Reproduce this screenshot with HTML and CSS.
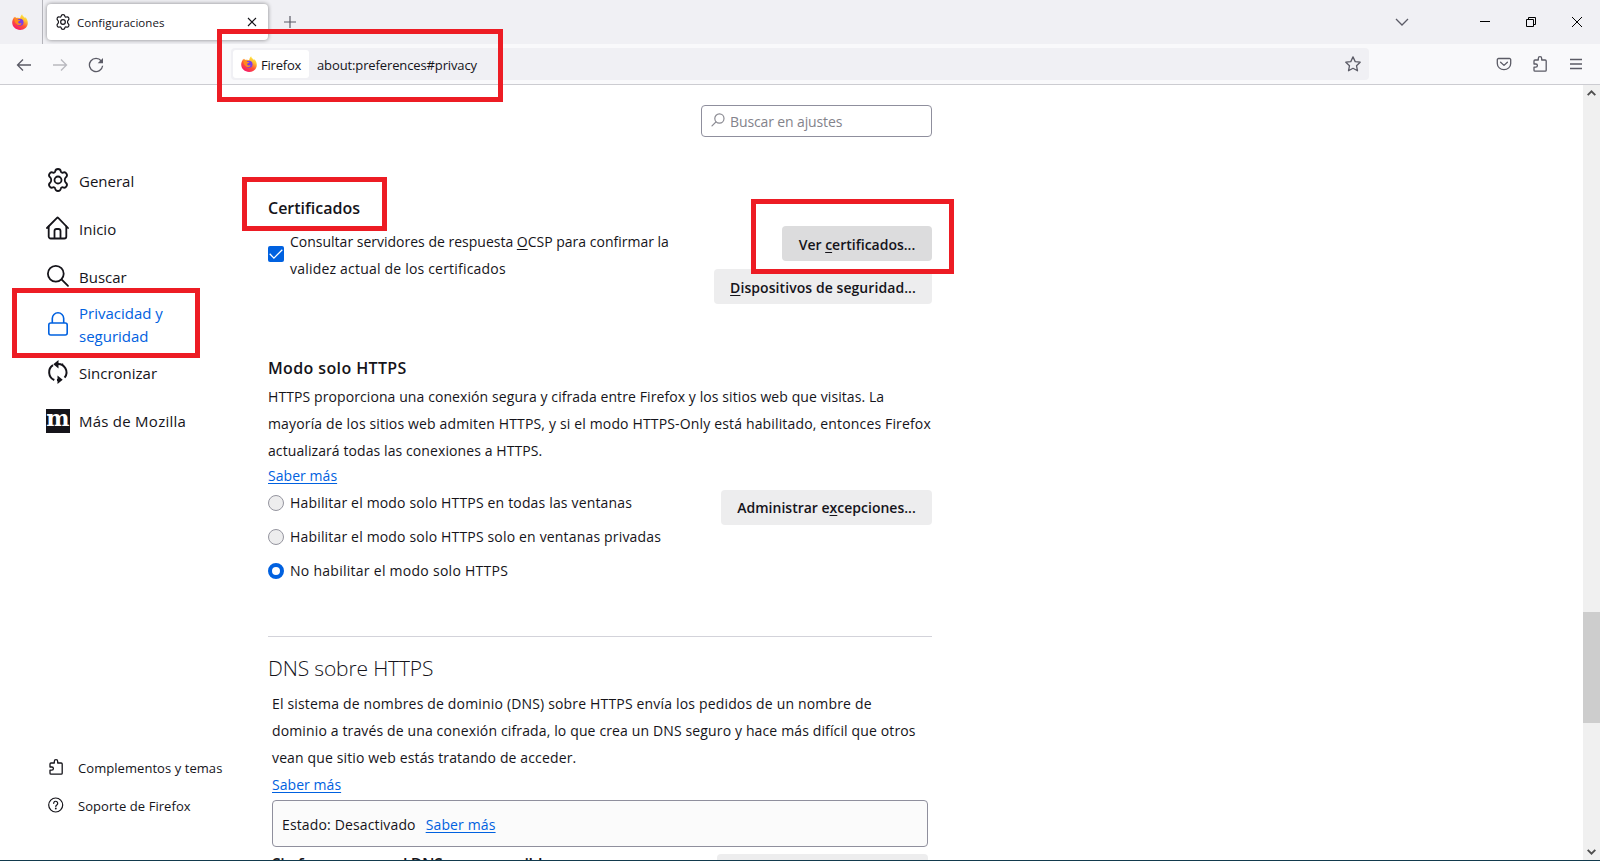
FILE: index.html
```html
<!DOCTYPE html>
<html lang="es">
<head>
    <meta charset="UTF-8">
    <meta name="viewport" content="width=device-width, initial-scale=1.0">
    <title>Configuraciones</title>
    <link rel="stylesheet" href="styles.css">
</head>
<body>
    <!-- Shared icons -->
    <svg class="defs" width="0" height="0">
        <defs>
            <linearGradient id="flame" x1="0.85" y1="0.05" x2="0.3" y2="1">
                <stop offset="0" stop-color="#fff44f"/>
                <stop offset="0.3" stop-color="#ffbd2f"/>
                <stop offset="0.6" stop-color="#ff5634"/>
                <stop offset="1" stop-color="#f5156c"/>
            </linearGradient>
        </defs>
        <symbol id="firefox" viewBox="0 0 16 16">
            <path fill="url(#flame)" d="M10.2.2c.2 1.300 1 2.100 2.100 3 .4.300.6.700.8 1.100.2-.4.200-.8.100-1.200 1.700 1.500 2.600 3.600 2.600 5.900C15.800 13 12.400 16 8.100 16 3.800 16 .2 12.900.2 8.600c0-1.700.5-3.300 1.500-4.600l.4-1.200.9.900 1-.9.200 1.300c1.300-.6 2.700-.5 4 .1C8.400 2.500 9 1.100 10.200.2z"/>
            <circle cx="8" cy="8.300" r="3.500" fill="#7a3ce8"/>
            <path fill="#ff8a1e" d="M2.300 5.200c1.500-.9 3.400-.4 4.100.7l2 .1c-.2.900-1.400 1.200-2 1.600-.5.400-.3 1.300.4 1.700 1 .5 1.800-.2 2.800.1-.8 1.700-3 2.100-4.500 1-1.400-1.100-2.800-2.600-2.800-5.200z"/>
        </symbol>
        <symbol id="gear" viewBox="0 0 24 24">
            <g fill="none" stroke="currentColor" stroke-width="1.800" stroke-linejoin="round">
                <circle cx="12" cy="12" r="3.500"/>
                <path d="M12 1c1.500 0 2.600.9 2.800 2.300.1 1.100 1.200 1.700 2.200 1.300 1.300-.6 2.700-.2 3.500 1.100s.5 2.700-.6 3.600c-1.500 1.100-1.500 4.300 0 5.400 1.100.9 1.400 2.300.6 3.600s-2.200 1.700-3.500 1.100c-1-.4-2.100.2-2.200 1.300C14.600 22.100 13.500 23 12 23s-2.600-.9-2.800-2.300c-.1-1.100-1.200-1.700-2.200-1.300-1.300.6-2.700.2-3.500-1.100s-.5-2.700.6-3.600c1.500-1.100 1.500-4.300 0-5.400C3 8.400 2.700 7 3.500 5.700S5.700 4 7 4.600c1 .4 2.100-.2 2.200-1.300C9.400 1.900 10.500 1 12 1z"/>
            </g>
        </symbol>
        <symbol id="puzzle" viewBox="0 0 16 16">
            <path fill="none" stroke="currentColor" stroke-width="1.300" stroke-linejoin="round" stroke-linecap="round" d="M6.300 4V2.400a1.700 1.700 0 0 1 3.400 0V4h3.500a1 1 0 0 1 1 1v9.200a1 1 0 0 1-1 1H3a1 1 0 0 1-1-1v-3h1.800a1.600 1.600 0 0 0 0-3.200H2V5a1 1 0 0 1 1-1z"/>
        </symbol>
    </svg>

    <!-- Tab strip -->
    <div class="tab-bar">
        <div class="firefox-view">
            <svg width="16" height="16"><use href="#firefox"/></svg>
        </div>
        <div class="tab">
            <svg class="tab-icon" width="16" height="16"><use href="#gear"/></svg>
            <span class="tab-title">Configuraciones</span>
            <svg width="10" height="10" viewBox="0 0 10 10"><path d="M1 1l8 8M9 1l-8 8" stroke="#15141a" stroke-width="1.100"/></svg>
        </div>
        <svg class="new-tab" width="12" height="12" viewBox="0 0 12 12"><path d="M6 0v12M0 6h12" stroke="#5b5b66" stroke-width="1.200"/></svg>
        <div class="window-controls">
            <svg width="14" height="10" viewBox="0 0 14 10"><path d="M1 2l6 6 6-6" fill="none" stroke="#5b5b66" stroke-width="1.300"/></svg>
            <svg class="minimize" width="10" height="10" viewBox="0 0 10 10"><path d="M0 4.500h10" stroke="#000"/></svg>
            <svg width="10" height="10" viewBox="0 0 10 10"><path d="M.5 2.500h7v7h-7zM2.500 2.500v-2h7v7h-2" fill="none" stroke="#000"/></svg>
            <svg width="10" height="10" viewBox="0 0 10 10"><path d="M0 0l10 10M10 0L0 10" stroke="#000"/></svg>
        </div>
    </div>

    <!-- Navigation toolbar -->
    <div class="nav-bar">
        <div class="nav-buttons">
            <svg width="16" height="16" viewBox="0 0 16 16"><path d="M15 8H1.500M7 2.500L1.500 8 7 13.500" fill="none" stroke="#5b5b66" stroke-width="1.300"/></svg>
            <svg class="disabled" width="16" height="16" viewBox="0 0 16 16"><path d="M1 8h13.500M9 2.500L14.500 8 9 13.500" fill="none" stroke="#5b5b66" stroke-width="1.300"/></svg>
            <svg width="16" height="16" viewBox="0 0 16 16"><path d="M13.300 4A6.600 6.600 0 1 0 14.600 8.700" fill="none" stroke="#5b5b66" stroke-width="1.300"/><path d="M15 1v5.300H9.700z" fill="#5b5b66"/></svg>
        </div>
        <div class="url-bar">
            <div class="identity">
                <svg width="16" height="16"><use href="#firefox"/></svg>
                <span>Firefox</span>
            </div>
            <span class="url">about:preferences#privacy</span>
            <svg width="16" height="16" viewBox="0 0 16 16"><path d="M8 .9l2.200 4.700 5 .6-3.700 3.500 1 5.100L8 12.300l-4.500 2.500 1-5.100L.8 6.200l5-.6z" fill="none" stroke="#5b5b66" stroke-width="1.300" stroke-linejoin="round"/></svg>
        </div>
        <div class="toolbar-icons">
            <svg width="16" height="16" viewBox="0 0 16 16"><path d="M2.500 2.500h11a1.200 1.200 0 0 1 1.200 1.200v3.800a6.700 6.200 0 0 1-13.400 0V3.700a1.200 1.200 0 0 1 1.200-1.200zM4.600 6.200L8 9.400l3.400-3.200" fill="none" stroke="#5b5b66" stroke-width="1.300" stroke-linecap="round" stroke-linejoin="round"/></svg>
            <svg width="16" height="16"><use href="#puzzle"/></svg>
            <svg width="12" height="12" viewBox="0 0 12 12"><path d="M0 1.500h12M0 6h12M0 10.500h12" stroke="#5b5b66" stroke-width="1.300"/></svg>
        </div>
    </div>

    <!-- Preferences page -->
    <div class="page">
        <nav class="sidebar">
            <ul class="categories">
                <li>
                    <svg width="24" height="24"><use href="#gear"/></svg>
                    <span>General</span>
                </li>
                <li>
                    <svg width="24" height="24" viewBox="0 0 24 24"><g fill="none" stroke="currentColor" stroke-width="1.800" stroke-linejoin="round" stroke-linecap="round"><path d="M1 12L11 1.800a.9.900 0 0 1 1.200 0L22 12"/><path d="M2.700 10.500v10a2 2 0 0 0 2 2h13.600a2 2 0 0 0 2-2v-10M8.500 22.500V15a2 2 0 0 1 2-2h2a2 2 0 0 1 2 2v7.500"/></g></svg>
                    <span>Inicio</span>
                </li>
                <li>
                    <svg width="24" height="24" viewBox="0 0 24 24"><g fill="none" stroke="currentColor" stroke-width="1.800" stroke-linecap="round"><circle cx="9.800" cy="9.700" r="7.900"/><path d="M15.500 15.400l6.500 6.400"/></g></svg>
                    <span>Buscar</span>
                </li>
                <li class="selected">
                    <svg width="24" height="24" viewBox="0 0 24 24"><g fill="none" stroke="currentColor" stroke-width="1.600"><rect x="2.800" y="11" width="18.400" height="12" rx="2"/><path d="M6.300 11V6.500A5.500 5.500 0 0 1 17.700 6.500V11"/></g></svg>
                    <span>Privacidad y seguridad</span>
                </li>
                <li>
                    <svg width="24" height="24" viewBox="0 0 24 24"><path fill="none" stroke="currentColor" stroke-width="2" d="M8.300 20A8.400 8.400 0 0 1 7 5.200M11 4.100a8.400 8.400 0 0 1 7.600 13.600M15.700 4l1.300.8M13 19.900l-2 .1"/><path d="M12.500 0v8.500L7.300 4.200zM11.500 15.500V24l5.200-4.300z" fill="currentColor"/></svg>
                    <span>Sincronizar</span>
                </li>
                <li>
                    <span class="mozilla-logo">m</span>
                    <span class="mozilla-label">Más de Mozilla</span>
                </li>
            </ul>
            <ul class="footer-links">
                <li>
                    <svg width="16" height="16"><use href="#puzzle"/></svg>
                    <span>Complementos y temas</span>
                </li>
                <li>
                    <svg width="16" height="16" viewBox="0 0 16 16"><g fill="none" stroke="currentColor" stroke-width="1.200" stroke-linecap="round"><circle cx="7.700" cy="8" r="7"/><path d="M5.700 6.300a2 2 0 1 1 3.300 1.500c-.8.600-1.200.9-1.200 1.700"/></g><circle cx="7.800" cy="11.500" r=".9" fill="currentColor"/></svg>
                    <span>Soporte de Firefox</span>
                </li>
            </ul>
        </nav>

        <main class="content">
            <div class="search-box">
                <svg width="14" height="14" viewBox="0 0 14 14"><g fill="none" stroke="#8a8a92" stroke-width="1.200" stroke-linecap="round"><circle cx="8.400" cy="5.500" r="4.600"/><path d="M5 8.800L1 12.800"/></g></svg>
                <span>Buscar en ajustes</span>
            </div>

            <section class="certificates">
                <h2>Certificados</h2>
                <div class="row">
                    <label class="check-row">
                        <span class="checkbox"><svg width="16" height="16" viewBox="0 0 16 16"><path d="M1.700 7.800l4.200 4.300 8.400-8.400" fill="none" stroke="#fff" stroke-width="1.300"/></svg></span>
                        <span class="check-text">Consultar servidores de respuesta <u>O</u>CSP para confirmar la<br><span class="wide">validez actual de los certificados</span></span>
                    </label>
                    <div class="buttons">
                        <button class="btn active view-certs">Ver <u>c</u>ertificados...</button>
                        <button class="btn devices"><u>D</u>ispositivos de seguridad...</button>
                    </div>
                </div>
            </section>

            <section class="https-only">
                <h2>Modo solo HTTPS</h2>
                <p class="https-text">HTTPS proporciona una conexión segura y cifrada entre Firefox y los sitios web que visitas. La<br><span class="wide">mayoría de los sitios web admiten HTTPS, y si el modo HTTPS-Only está habilitado, entonces Firefox</span><br>actualizará todas las conexiones a HTTPS.</p>
                <a class="learn-more" href="#">Saber más</a>
                <div class="row">
                    <div class="radios">
                        <label><span class="radio"></span><span>Habilitar el modo solo HTTPS en todas las ventanas</span></label>
                        <label><span class="radio"></span><span>Habilitar el modo solo HTTPS solo en ventanas privadas</span></label>
                        <label><span class="radio checked"></span><span class="wide">No habilitar el modo solo HTTPS</span></label>
                    </div>
                    <button class="btn exceptions">Administrar e<u>x</u>cepciones...</button>
                </div>
            </section>

            <section class="dns">
                <h1>DNS sobre HTTPS</h1>
                <div class="dns-body">
                    <p><span class="wide">El sistema de nombres de dominio (DNS) sobre HTTPS envía los pedidos de un nombre de</span><br>dominio a través de una conexión cifrada, lo que crea un DNS seguro y hace más difícil que otros<br>vean que sitio web estás tratando de acceder.</p>
                    <a class="learn-more" href="#">Saber más</a>
                    <div class="status-box">
                        <span>Estado: Desactivado</span>
                        <a href="#">Saber más</a>
                    </div>
                    <div class="row next-row">
                        <h2>Sin forzar nunca el DNS en uso posible</h2>
                        <button class="btn exceptions">Administrar excepciones...</button>
                    </div>
                </div>
            </section>
        </main>

        <div class="scrollbar">
            <svg width="9" height="6" viewBox="0 0 9 6"><path d="M.7 5.200l3.800-3.800 3.800 3.800" fill="none" stroke="#505050" stroke-width="1.900"/></svg>
            <div class="track"><div class="thumb"></div></div>
            <svg width="9" height="6" viewBox="0 0 9 6"><path d="M.7.800l3.800 3.800L8.300.800" fill="none" stroke="#505050" stroke-width="1.900"/></svg>
        </div>
    </div>

    <!-- Highlights over the page -->
    <div class="highlight highlight-url"></div>
    <div class="highlight highlight-title"></div>
    <div class="highlight highlight-button"></div>
    <div class="highlight highlight-privacy"></div>
</body>
</html>
```

FILE: styles.css
```css
* {
    box-sizing: border-box;
}
body {
    margin: 0;
    height: 861px;
    display: flex;
    flex-direction: column;
    overflow: hidden;
    position: relative;
    background: #fff;
    border-bottom: 1px solid #123a4d;
    font-family: "Open Sans", "Noto Sans", sans-serif;
    font-size: 14px;
    color: #15141a;
}
svg {
    display: block;
    flex: none;
}
.defs {
    position: absolute;
}
ul {
    list-style: none;
    margin: 0;
    padding: 0;
}
h1, h2, p {
    margin: 0;
    white-space: nowrap;
}
a {
    color: #0061e0;
    text-underline-offset: 2px;
}
u {
    text-underline-offset: 2px;
}

/* Tab strip */
.tab-bar {
    flex: none;
    display: flex;
    align-items: center;
    height: 44px;
    background: #f0f0f4;
}
.firefox-view {
    width: 43px;
    height: 44px;
    padding: 14px 0 0 12px;
    border-right: 1px solid #b4b4ba;
}
.tab {
    display: flex;
    align-items: center;
    width: 221px;
    height: 36px;
    margin-left: 4px;
    padding: 0 11px 0 8px;
    background: #fff;
    border-radius: 4px;
    box-shadow: 0 0 4px rgba(0, 0, 0, 0.45);
}
.tab-title {
    flex: 1;
    margin-left: 6px;
    font-size: 11.5px;
    letter-spacing: 0.05px;
}
.new-tab {
    margin-left: 16px;
}
.window-controls {
    display: flex;
    align-items: center;
    gap: 36px;
    margin-left: auto;
    padding-right: 18px;
}
.minimize {
    margin-left: 35px;
}

/* Navigation toolbar */
.nav-bar {
    flex: none;
    display: flex;
    align-items: center;
    height: 41px;
    background: #f9f9fb;
    border-bottom: 1px solid #ccccd1;
    color: #5b5b66;
}
.nav-buttons {
    display: flex;
    gap: 20px;
    width: 231px;
    padding: 1px 0 0 16px;
}
.disabled {
    opacity: 0.4;
}
.url-bar {
    display: flex;
    align-items: center;
    width: 1138px;
    height: 32px;
    padding: 0 8px 0 2px;
    background: #f0f0f4;
    border-radius: 4px;
    color: #15141a;
}
.identity {
    display: flex;
    align-items: center;
    gap: 4px;
    width: 76px;
    height: 28px;
    padding-left: 8px;
    background: #fff;
    border-radius: 3px;
    font-size: 13px;
    letter-spacing: -0.2px;
}
.identity span, .url {
    padding-top: 2px;
}
.url {
    flex: 1;
    margin-left: 8px;
    font-size: 13px;
    letter-spacing: -0.12px;
}
.toolbar-icons {
    display: flex;
    align-items: center;
    gap: 20px;
    margin-left: auto;
    padding-right: 18px;
}
.toolbar-icons svg:last-child {
    margin-left: 2px;
}

/* Page */
.page {
    flex: 1;
    min-height: 0;
    display: flex;
    overflow: hidden;
}
.sidebar {
    display: flex;
    flex-direction: column;
    justify-content: space-between;
    width: 268px;
    padding: 72px 0 35px 46px;
}
.categories li {
    display: flex;
    align-items: center;
    gap: 9px;
    width: 150px;
    height: 48px;
    font-size: 15px;
    line-height: 23px;
}
.categories svg {
    margin-bottom: 2px;
}
.categories .selected {
    color: #0061e0;
}
.mozilla-logo {
    width: 24px;
    height: 24px;
    margin-bottom: 1px;
    background: #15141a;
    color: #fff;
    font-family: "DejaVu Serif", serif;
    font-weight: bold;
    font-size: 22px;
    line-height: 19px;
    text-align: center;
}
.mozilla-label {
    letter-spacing: 0.25px;
}
.footer-links li {
    display: flex;
    align-items: center;
    gap: 14px;
    height: 38px;
    padding-left: 2px;
    font-size: 13px;
    letter-spacing: 0.06px;
}
.footer-links svg {
    margin-bottom: 2px;
}
.content {
    width: 664px;
    padding-top: 20px;
}
.search-box {
    display: flex;
    align-items: center;
    gap: 5px;
    width: 231px;
    height: 32px;
    margin-left: auto;
    padding-left: 9px;
    border: 1px solid #8f8f9d;
    border-radius: 4px;
    color: #83838b;
    letter-spacing: -0.12px;
}
.search-box svg {
    margin-bottom: 2px;
}
h2 {
    font-size: 16px;
    font-weight: 600;
    line-height: 24px;
}
p {
    line-height: 27px;
    letter-spacing: 0.135px;
}
.row {
    display: flex;
    justify-content: space-between;
    align-items: flex-start;
}
.certificates {
    margin-top: 59px;
}
.certificates .row {
    margin-top: 6px;
}
.check-row {
    display: flex;
    align-items: center;
    gap: 6px;
    line-height: 27px;
    white-space: nowrap;
    margin-top: 2px;
}
.check-row .wide {
    letter-spacing: 0.2px;
}
.checkbox {
    width: 16px;
    height: 16px;
    margin-bottom: 2px;
    background: #0061e0;
    border-radius: 2px;
}
.buttons {
    display: flex;
    flex-direction: column;
    align-items: flex-end;
    gap: 8px;
}
.btn {
    flex: none;
    height: 35px;
    padding: 1px 0 0;
    border: none;
    border-radius: 4px;
    background: #ededee;
    color: #15141a;
    font-family: inherit;
    font-size: 14px;
    font-weight: 600;
    white-space: nowrap;
}
.active {
    background: #dcdcdd;
}
.view-certs {
    width: 150px;
}
.devices {
    width: 218px;
    letter-spacing: 0.07px;
}
.exceptions {
    width: 211px;
    padding: 0;
}
.https-only {
    margin-top: 52px;
}
.https-only h2 {
    letter-spacing: 0.38px;
}
.https-text {
    margin-top: 3px;
    letter-spacing: 0.09px;
}
.https-text .wide {
    letter-spacing: 0.155px;
}
.learn-more {
    display: block;
    width: max-content;
    line-height: 23px;
    letter-spacing: 0.05px;
}
.radios {
    margin-top: -1px;
}
.radios label {
    display: flex;
    align-items: center;
    gap: 6px;
    height: 34px;
    letter-spacing: 0.17px;
}
.radios label span:last-child {
    padding-bottom: 2px;
}
.radios .wide {
    letter-spacing: 0.27px;
}
.https-only .exceptions {
    margin-top: 3px;
}
.radio {
    width: 16px;
    height: 16px;
    background: #ededee;
    border: 1px solid #95959f;
    border-radius: 50%;
}
.radio.checked {
    background: #fff;
    border: 4px solid #0061e0;
}
.dns {
    margin-top: 48px;
    padding-top: 16px;
    border-top: 1px solid #d3d3da;
}
h1 {
    font-size: 21px;
    font-weight: 300;
    line-height: 30px;
    letter-spacing: -0.15px;
}
.dns-body {
    padding: 7px 4px 0;
}
.dns-body .wide {
    letter-spacing: 0.17px;
}
.dns .learn-more {
    line-height: 27px;
}
.status-box {
    display: flex;
    align-items: center;
    gap: 10px;
    height: 47px;
    margin-top: 2px;
    padding: 2px 9px 0;
    background: #fbfbfb;
    border: 1px solid #8f8f9d;
    border-radius: 4px;
    letter-spacing: 0.14px;
}
.next-row {
    margin-top: 7px;
}
.next-row h2 {
    margin-top: -2px;
    letter-spacing: -0.45px;
}
.scrollbar {
    display: flex;
    flex-direction: column;
    align-items: center;
    width: 17px;
    margin-left: auto;
    padding: 5px 0;
    background: #f0f0f0;
}
.track {
    flex: 1;
    width: 17px;
    padding-top: 516px;
}
.thumb {
    height: 111px;
    background: #cdcdcd;
}

/* Highlights */
.highlight {
    position: absolute;
    border: 5px solid #ed1c24;
}
.highlight-url {
    left: 217px;
    top: 29px;
    width: 286px;
    height: 73px;
}
.highlight-title {
    left: 242px;
    top: 177px;
    width: 145px;
    height: 54px;
}
.highlight-button {
    left: 751px;
    top: 199px;
    width: 203px;
    height: 75px;
}
.highlight-privacy {
    left: 12px;
    top: 288px;
    width: 188px;
    height: 70px;
}
```
